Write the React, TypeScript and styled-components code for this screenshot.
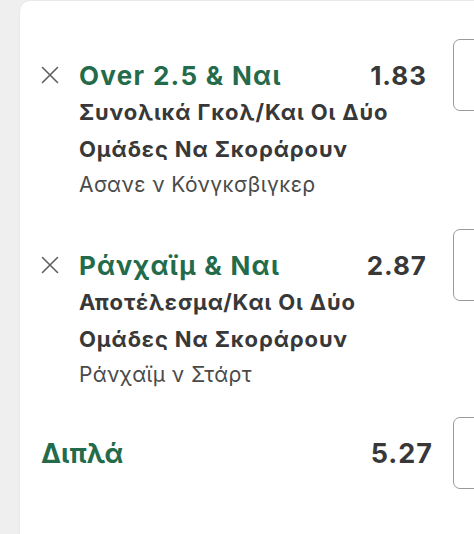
import React from "react";
import styled, { createGlobalStyle } from "styled-components";

const Global = createGlobalStyle`
  html, body { margin: 0; padding: 0; background: #efefef; }
  body { font-family: Inter, "Liberation Sans", sans-serif; -webkit-font-smoothing: antialiased; }
  #root { overflow: hidden; height: 534px; }
`;

const Card = styled.div`
  margin: 1px -79px 0 20px;
  min-height: 560px;
  background: #ffffff;
  border-top-left-radius: 10px;
  box-shadow: 0 0 2px rgba(0, 0, 0, 0.08);
  padding-top: 55px;
  display: flex;
  flex-direction: column;
`;

const Selection = styled.div`
  display: flex;
  flex-direction: column;
  padding-left: 20px;
  margin-bottom: 44px;
`;

const Header = styled.div`
  display: flex;
  align-items: center;
  height: 38px;
`;

const Remove = styled.button`
  width: 20px;
  height: 20px;
  padding: 0;
  border: none;
  background: none;
  display: flex;
  align-items: center;
  justify-content: center;
  margin-right: 19px;
  color: #5f5f5f;
`;

const Title = styled.div`
  flex: 1;
  font-size: 26px;
  font-weight: 700;
  letter-spacing: 1.3px;
  color: #236b4a;
  white-space: nowrap;
`;

const Odds = styled.div<{ $total?: boolean }>`
  font-size: ${(p) => (p.$total ? "27px" : "26px")};
  font-weight: 700;
  letter-spacing: 1px;
  color: #383838;
  margin-right: ${(p) => (p.$total ? "20px" : "26px")};
`;

const StakeBox = styled.div`
  width: 100px;
  height: 72px;
  flex: none;
  border: 1.5px solid #9a9a9a;
  border-radius: 7px;
  box-sizing: border-box;
`;

const Details = styled.div`
  padding-left: 39px;
`;

const Market = styled.div`
  font-size: 22px;
  font-weight: 700;
  letter-spacing: 0.87px;
  line-height: 37px;
  color: #383838;
`;

const Event = styled.div`
  font-size: 21px;
  font-weight: 400;
  letter-spacing: 0.42px;
  line-height: 34px;
  color: #4a4a4a;
`;

const TotalRow = styled(Header)`
  padding-left: 21px;
  margin-top: -2px;
`;

const TotalLabel = styled(Title)`
  font-size: 27px;
  letter-spacing: 0;
`;

const CloseIcon = () => (
  <svg width="18" height="18" viewBox="0 0 18 18" fill="none">
    <path d="M1.5 1.5 L16.5 16.5 M16.5 1.5 L1.5 16.5" stroke="currentColor" strokeWidth="1.6" strokeLinecap="round" />
  </svg>
);

const selections = [
  {
    title: "Over 2.5 & Ναι",
    odds: "1.83",
    market: ["Συνολικά Γκολ/Και Οι Δύο", "Ομάδες Να Σκοράρουν"],
    event: "Ασανε ν Κόνγκσβιγκερ",
  },
  {
    title: "Ράνχαϊμ & Ναι",
    odds: "2.87",
    market: ["Αποτέλεσμα/Και Οι Δύο", "Ομάδες Να Σκοράρουν"],
    event: "Ράνχαϊμ ν Στάρτ",
  },
];

export default function App() {
  return (
    <>
      <Global />
      <Card>
        {selections.map((s) => (
          <Selection key={s.title}>
            <Header>
              <Remove aria-label="remove">
                <CloseIcon />
              </Remove>
              <Title>{s.title}</Title>
              <Odds>{s.odds}</Odds>
              <StakeBox />
            </Header>
            <Details>
              {s.market.map((m) => (
                <Market key={m}>{m}</Market>
              ))}
              <Event>{s.event}</Event>
            </Details>
          </Selection>
        ))}
        <TotalRow>
          <TotalLabel>Διπλά</TotalLabel>
          <Odds $total>5.27</Odds>
          <StakeBox />
        </TotalRow>
      </Card>
    </>
  );
}
